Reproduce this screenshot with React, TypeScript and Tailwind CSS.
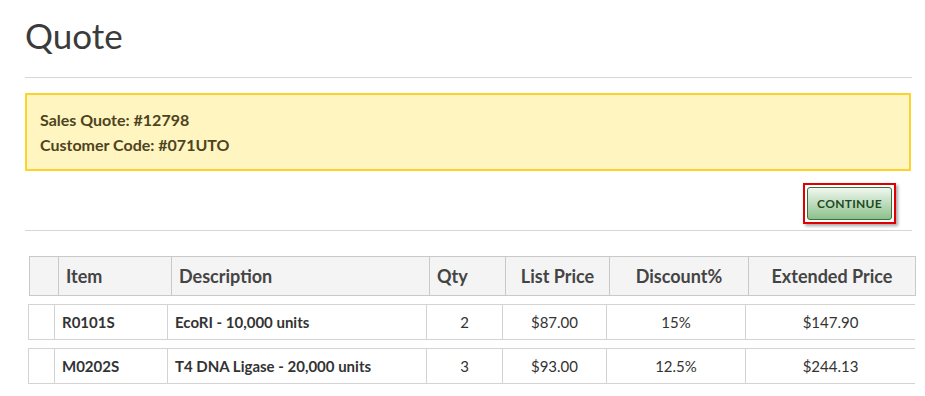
const cols = [
	{ key: 'blank', label: '', hw: 29, rw: 26, align: 'left' },
	{ key: 'item', label: 'Item', hw: 113, rw: 113, align: 'left' },
	{ key: 'desc', label: 'Description', hw: 258, rw: 259, align: 'left' },
	{ key: 'qty', label: 'Qty', hw: 76, rw: 76, align: 'left' },
	{ key: 'list', label: 'List Price', hw: 104, rw: 104, align: 'center' },
	{ key: 'disc', label: 'Discount%', hw: 139, rw: 139, align: 'center' },
	{ key: 'ext', label: 'Extended Price', hw: 167, rw: 170, align: 'center' },
];

const rows = [
	{ item: 'R0101S', desc: 'EcoRI - 10,000 units', qty: '2', list: '$87.00', disc: '15%', ext: '$147.90' },
	{ item: 'M0202S', desc: 'T4 DNA Ligase - 20,000 units', qty: '3', list: '$93.00', disc: '12.5%', ext: '$244.13' },
];

function HeaderRow() {
	return (
		<div className="flex ml-[4px] w-[887px] h-[40px] bg-[#f4f4f4] border border-[#c9c9c9]">
			{cols.map((c, i) => (
				<div
					key={c.key}
					style={{ width: c.hw - (i == 0 ? 1 : 0) }}
					className={
						'flex items-center text-[18px] font-bold text-[#444] px-[7px] ' +
						(i > 0 ? 'border-l border-[#c9c9c9] ' : '') +
						(c.align == 'center' ? 'justify-center' : 'justify-start')
					}
				>
					{c.label}
				</div>
			))}
		</div>
	);
}

function BodyRow(props: { row: any }) {
	const row = props.row;
	return (
		<div className="flex ml-[3px] w-[887px] h-[36px] border-t border-b border-l border-[#d3d3d3]">
			{cols.map((c, i) => {
				const bold = c.key == 'item' || c.key == 'desc';
				return (
					<div
						key={c.key}
						style={{ width: c.rw - (i == 0 ? 1 : 0) }}
						className={
							'flex items-center text-[15px] text-[#333] ' +
							(i > 0 ? 'border-l border-[#d3d3d3] ' : '') +
							(bold ? 'font-bold justify-start px-[7px]' : 'justify-center')
						}
					>
						{c.key == 'blank' ? '' : row[c.key]}
					</div>
				);
			})}
		</div>
	);
}

export default function App() {
	return (
		<div className="w-[925px] h-[396px] bg-white overflow-hidden" style={{ fontFamily: 'Lato, "Open Sans", sans-serif' }}>
			<div className="ml-[25px] w-[887px]">
				<h1 className="pt-[14px] text-[35px] leading-[42px] font-normal text-[#3b3b3b]">Quote</h1>
				<hr className="mt-[21px] border-0 border-t border-[#d6d6d6]" />
				<div className="mt-[15px] w-[886px] border-2 border-[#fcd22d] bg-[#fff5c0] px-[13px] py-[12px] text-[16px] leading-[25px] font-bold text-[#4d4321]">
					<div>Sales Quote: #12798</div>
					<div>Customer Code: #071UTO</div>
				</div>
				<div className="flex justify-end pr-[16px] mt-[12px]">
					<div className="border-2 border-[#e00000] p-[2px] shadow-[2px_2px_3px_rgba(0,0,0,0.35)]">
						<button className="h-[33px] px-[9px] rounded-[3px] border border-[#3d6e3d] bg-gradient-to-b from-[#f1f8f1] to-[#8cc08c] text-[12px] font-bold text-[#1e4a1e] tracking-[0.3px]">
							CONTINUE
						</button>
					</div>
				</div>
				<hr className="mt-[6px] border-0 border-t border-[#d6d6d6]" />
			</div>
			<div className="mt-[25px] flex flex-col gap-[8px] ml-[25px]">
				<HeaderRow />
				<BodyRow row={rows[0]} />
				<BodyRow row={rows[1]} />
			</div>
		</div>
	);
}
